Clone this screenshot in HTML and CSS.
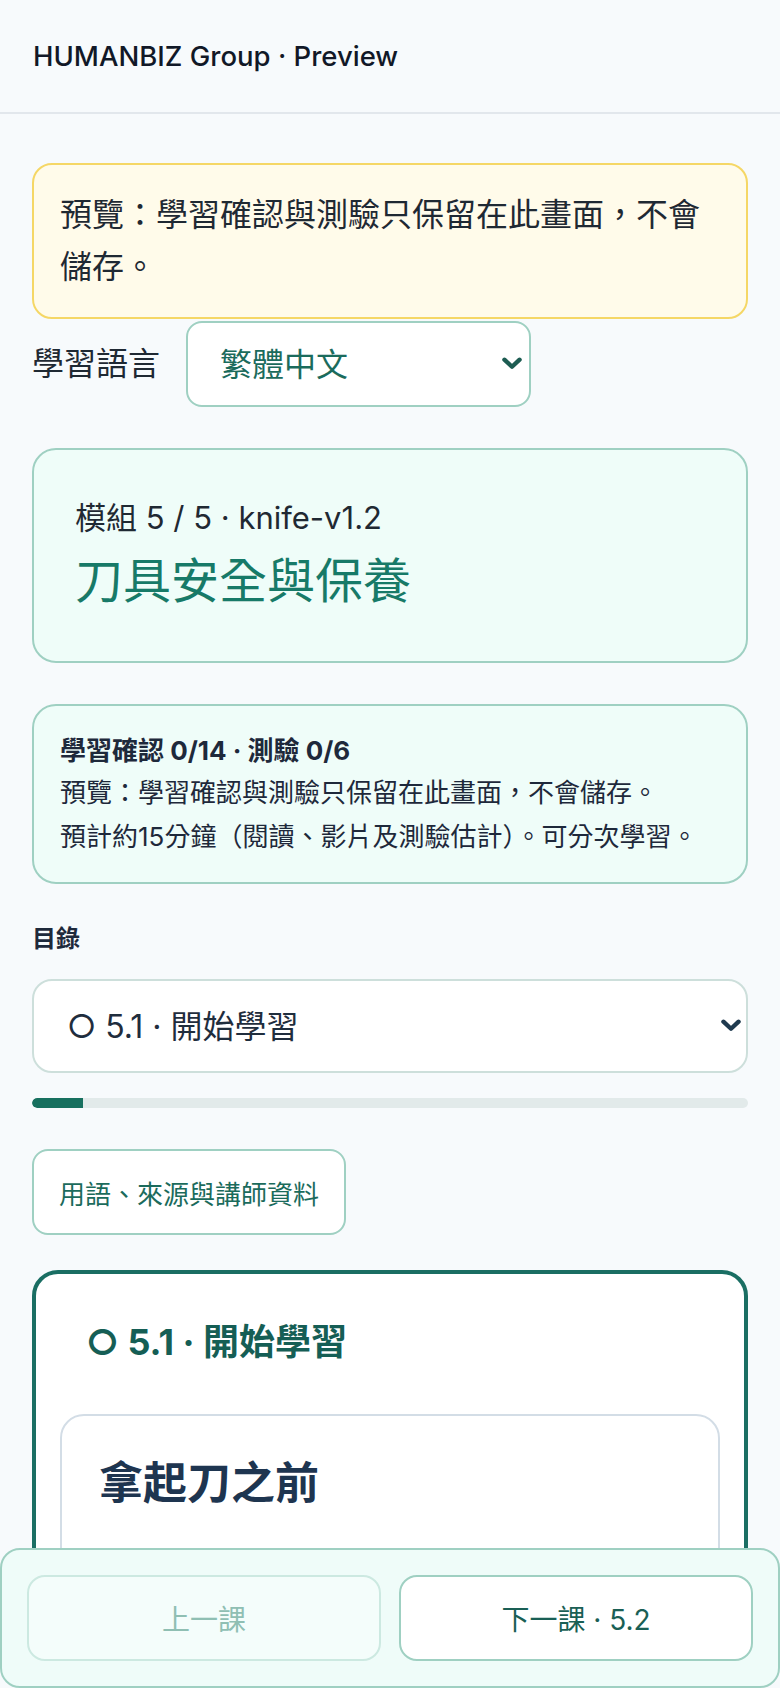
FILE: index.html
```html
<!DOCTYPE html>
<html lang="zh-Hant">
<head>
<meta charset="utf-8">
<title>HUMANBIZ Group · Preview</title>
<link rel="stylesheet" href="styles.css">
</head>
<body>
<header class="topbar">
  <div class="brand">HUMANBIZ Group · Preview</div>
</header>
<main class="page">
  <div class="notice">預覽：學習確認與測驗只保留在此畫面，不會儲存。</div>

  <div class="lang-row">
    <label class="lang-label" for="lang">學習語言</label>
    <div class="select-wrap lang-wrap">
      <select id="lang" class="lang-select">
        <option>繁體中文</option>
        <option>English</option>
      </select>
      <svg class="chev chev-teal" viewBox="0 0 20 12" aria-hidden="true"><path d="M3 2.5 L10 9 L17 2.5" fill="none" stroke="currentColor" stroke-width="4" stroke-linecap="round" stroke-linejoin="round"/></svg>
    </div>
  </div>

  <section class="module-card">
    <div class="module-meta">模組 5 / 5 · knife-v1.2</div>
    <h1 class="module-title">刀具安全與保養</h1>
  </section>

  <section class="status-card">
    <div class="status-strong">學習確認 0/14 · 測驗 0/6</div>
    <div class="status-line">預覽：學習確認與測驗只保留在此畫面，不會儲存。</div>
    <div class="status-line">預計約15分鐘（閱讀、影片及測驗估計）。可分次學習。</div>
  </section>

  <div class="toc-label">目錄</div>
  <div class="select-wrap toc-wrap">
    <select class="toc-select">
      <option>○ 5.1 · 開始學習</option>
      <option>○ 5.2</option>
    </select>
    <svg class="chev chev-navy" viewBox="0 0 20 12" aria-hidden="true"><path d="M3 2.5 L10 9 L17 2.5" fill="none" stroke="currentColor" stroke-width="4" stroke-linecap="round" stroke-linejoin="round"/></svg>
  </div>

  <div class="progress"><div class="progress-fill" style="width:7.14%"></div></div>

  <button class="glossary-btn" type="button">用語、來源與講師資料</button>

  <section class="lesson-card">
    <h2 class="lesson-heading">○ 5.1 · 開始學習</h2>
    <article class="lesson-inner">
      <h3 class="lesson-title">拿起刀之前</h3>
    </article>
  </section>
</main>

<nav class="bottom-nav">
  <button class="nav-btn nav-prev" type="button" disabled>上一課</button>
  <button class="nav-btn nav-next" type="button">下一課 · 5.2</button>
</nav>
</body>
</html>
```

FILE: styles.css
```css
* { box-sizing: border-box; }

html, body {
  margin: 0;
  padding: 0;
}

body {
  background: #f7fafc;
  color: #1f2933;
  font-family: "Inter", "Noto Sans CJK TC", sans-serif;
}

.topbar {
  height: 114px;
  padding: 0 33px;
  display: flex;
  align-items: center;
  border-bottom: 2px solid #e2e7ec;
  background: #f7fafc;
}

.brand {
  font-size: 27.5px;
  font-weight: 500;
  color: #111827;
}

.page {
  padding: 49px 32px 200px;
}

.notice {
  background: #fffbea;
  border: 2px solid #f5d766;
  border-radius: 20px;
  padding: 24px 26px;
  font-size: 32px;
  line-height: 52px;
  color: #1f2933;
}

.lang-row {
  display: flex;
  align-items: center;
  gap: 26px;
  margin-top: 2px;
}

.lang-label {
  font-size: 32px;
  line-height: 44px;
  color: #1f2933;
}

.select-wrap {
  position: relative;
}

.select-wrap select {
  appearance: none;
  -webkit-appearance: none;
  width: 100%;
  height: 100%;
  background: #ffffff;
  font-family: "Inter", "Noto Sans CJK TC", sans-serif;
  font-size: 32px;
  outline: none;
  cursor: pointer;
}

.chev {
  position: absolute;
  top: 50%;
  width: 22px;
  height: 13px;
  margin-top: -7px;
  pointer-events: none;
}

.lang-wrap {
  width: 345px;
  height: 86px;
}

.lang-select {
  border: 2px solid #9fd0c2;
  border-radius: 16px;
  padding: 0 0 0 32px;
  color: #1b6b5c;
}

.chev-teal {
  right: 8px;
  color: #1d5c52;
}

.module-card {
  margin-top: 41px;
  background: #effdf9;
  border: 2px solid #9fd0c2;
  border-radius: 24px;
  padding: 45px 41px 50px;
}

.module-meta {
  font-size: 31px;
  line-height: 45px;
  color: #1f2933;
}

.module-title {
  margin: 11px 0 0;
  font-size: 48px;
  line-height: 60px;
  font-weight: 400;
  color: #177a68;
}

.status-card {
  margin-top: 41px;
  background: #effdf9;
  border: 2px solid #9fd0c2;
  border-radius: 24px;
  padding: 25px 26px 23px;
  color: #1e293b;
  font-size: 26px;
  line-height: 44px;
}

.status-strong {
  font-weight: 700;
  line-height: 40px;
}

.toc-label {
  margin: 37px 0 22px;
  font-size: 24px;
  line-height: 36px;
  font-weight: 700;
  color: #1e293b;
}

.toc-wrap {
  width: 100%;
  height: 94px;
}

.toc-select {
  border: 2px solid #cddfdb;
  border-radius: 20px;
  padding: 0 0 0 33px;
  color: #1f2d3d;
}

.chev-navy {
  right: 6px;
  color: #1f3a4f;
}

.progress {
  margin-top: 25px;
  height: 10px;
  border-radius: 5px;
  background: #e2eaea;
  overflow: hidden;
}

.progress-fill {
  height: 100%;
  background: #17705f;
  border-radius: 5px 0 0 5px;
}

.glossary-btn {
  display: block;
  margin-top: 41px;
  height: 86px;
  padding: 0 25px;
  background: #ffffff;
  border: 2px solid #9fd0c2;
  border-radius: 16px;
  font-family: "Inter", "Noto Sans CJK TC", sans-serif;
  font-size: 26px;
  color: #1b6b5c;
}

.lesson-card {
  margin-top: 35px;
  background: #ffffff;
  border: 4px solid #1a6e63;
  border-radius: 26px;
  padding: 46px 24px 0;
}

.lesson-heading {
  margin: 0 0 50px;
  padding: 0 26px;
  font-size: 36px;
  line-height: 44px;
  font-weight: 700;
  color: #155e55;
}

.lesson-inner {
  border: 2px solid #d3dde6;
  border-radius: 24px;
  padding: 38px 37px;
  min-height: 420px;
}

.lesson-title {
  margin: 0;
  font-size: 44px;
  line-height: 58px;
  font-weight: 700;
  color: #1e3550;
}

.bottom-nav {
  position: fixed;
  left: 0;
  right: 0;
  bottom: 0;
  height: 140px;
  display: flex;
  gap: 18px;
  padding: 25px 25px;
  background: #effcf9;
  border: 2px solid #9fd0c2;
  border-radius: 20px;
}

.nav-btn {
  flex: 1;
  height: 86px;
  border-radius: 18px;
  font-family: "Inter", "Noto Sans CJK TC", sans-serif;
  font-size: 28px;
}

.nav-prev {
  background: #f4fdfb;
  border: 2px solid #cce9e1;
  color: #8fbfb3;
}

.nav-next {
  background: #ffffff;
  border: 2px solid #9fd0c2;
  color: #1a5f55;
}
```
